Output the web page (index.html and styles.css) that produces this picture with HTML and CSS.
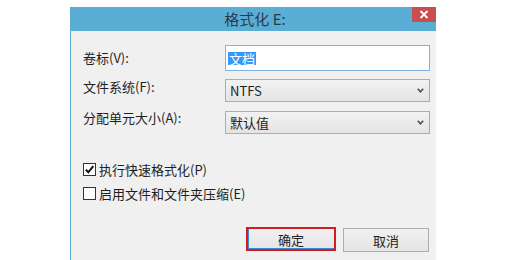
FILE: index.html
```html
<!DOCTYPE html>
<html lang="zh-CN">
<head>
<meta charset="utf-8">
<title>格式化 E:</title>
<link rel="stylesheet" href="styles.css">
</head>
<body>
<div class="dialog">
  <div class="titlebar">
    <span class="title">格式化 E:</span>
    <div class="close">
      <svg width="10" height="9" viewBox="0 0 10 9"><path d="M1.5 1 L8.5 8 M8.5 1 L1.5 8" stroke="#fff" stroke-width="1.8" fill="none"/></svg>
    </div>
  </div>
  <div class="content">
    <div class="form">
      <label class="label">卷标(V):</label>
      <div class="field input"><span class="sel">文档</span></div>
      <label class="label">文件系统(F):</label>
      <div class="field select s1"><span>NTFS</span>
        <svg class="chev" width="7" height="5" viewBox="0 0 7 5"><path d="M0.8 0.8 L3.5 3.8 L6.2 0.8" stroke="#555" stroke-width="1.7" fill="none"/></svg>
      </div>
      <label class="label">分配单元大小(A):</label>
      <div class="field select s2"><span>默认值</span>
        <svg class="chev" width="7" height="5" viewBox="0 0 7 5"><path d="M0.8 0.8 L3.5 3.8 L6.2 0.8" stroke="#555" stroke-width="1.7" fill="none"/></svg>
      </div>
    </div>
    <div class="checks">
      <div class="check">
        <span class="box"><svg width="11" height="11" viewBox="0 0 11 11"><path d="M1.8 5.6 L4.3 8.3 L9.3 2.2" stroke="#111" stroke-width="2" fill="none"/></svg></span>
        <span>执行快速格式化(P)</span>
      </div>
      <div class="check">
        <span class="box"></span>
        <span>启用文件和文件夹压缩(E)</span>
      </div>
    </div>
    <div class="buttons">
      <div class="btn ok">确定</div>
      <div class="btn cancel">取消</div>
    </div>
  </div>
</div>
</body>
</html>
```

FILE: styles.css
```css
html, body {
  margin: 0;
  padding: 0;
  background: #ffffff;
}
body {
  font-family: "Noto Sans CJK SC", "Liberation Sans", sans-serif;
  font-size: 13px;
  color: #1e1e1e;
  overflow: hidden;
  height: 260px;
}
.dialog {
  margin: 7px 0 0 70px;
  width: 366px;
  height: 253px;
  background: #f0f0f0;
  box-sizing: border-box;
  border-left: 1px solid #5aaed6;
}
.titlebar {
  position: relative;
  height: 24px;
  background: #5aaed6;
  display: flex;
  justify-content: center;
  align-items: center;
  margin-left: -1px;
}
.title {
  font-size: 15px;
  color: #2b3a44;
  line-height: 24px;
  padding-left: 4px;
}
.close {
  position: absolute;
  top: 0;
  right: 0;
  width: 24px;
  height: 15px;
  background: #c94f4f;
  display: flex;
  align-items: center;
  justify-content: center;
}
.content {
  padding: 14px 6px 0 12px;
}
.form {
  display: grid;
  grid-template-columns: 142px 205px;
  align-items: center;
}
.label {
  line-height: 16px;
}
.field {
  box-sizing: border-box;
  display: flex;
  align-items: center;
}
.input {
  height: 26px;
  background: #fff;
  border: 1px solid #7eb4e3;
  padding-left: 2px;
}
.sel {
  background: #3399ff;
  color: #fff;
  line-height: 13px;
  padding: 0 1px;
  font-size: 13px;
}
.select {
  height: 23px;
  border: 1px solid #acacac;
  background: linear-gradient(#f2f2f2, #e4e4e4);
  padding: 0 5px 0 4px;
  justify-content: space-between;
}
.s1 { margin-top: 8px; }
.s2 { margin-top: 9px; }
.chev { display: block; }
.checks {
  margin-top: 29px;
  display: flex;
  flex-direction: column;
  gap: 11px;
}
.check {
  display: flex;
  align-items: center;
  gap: 3px;
  height: 13px;
}
.box {
  width: 13px;
  height: 13px;
  box-sizing: border-box;
  border: 1px solid #333;
  background: #fff;
  display: flex;
  align-items: center;
  justify-content: center;
}
.buttons {
  margin-top: 27px;
  display: flex;
  justify-content: flex-end;
  align-items: flex-start;
  gap: 7px;
  padding-right: 1px;
}
.btn {
  box-sizing: border-box;
  height: 24px;
  display: flex;
  align-items: center;
  justify-content: center;
  background: linear-gradient(#f0f0f0, #e5e5e5);
  border: 1px solid #acacac;
}
.ok {
  width: 90px;
  border: 2px solid #d71920;
  box-shadow: inset 1px -1px 0 #3c8fd6;
}
.cancel {
  width: 86px;
  margin-top: 1px;
}
```
